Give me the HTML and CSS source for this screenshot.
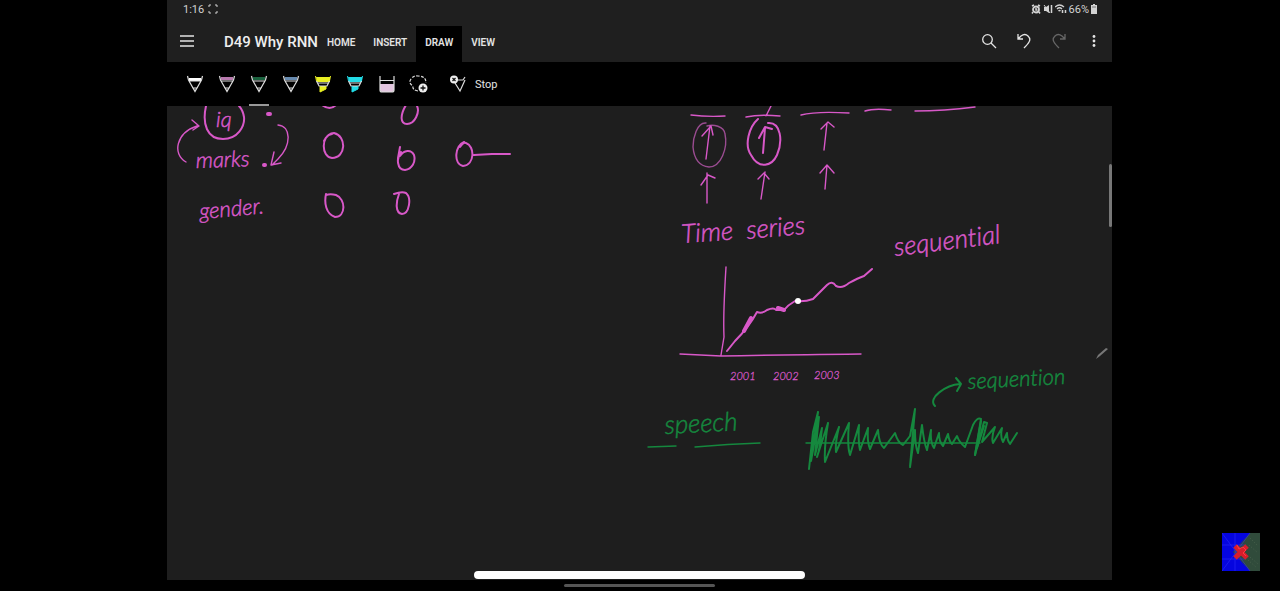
FILE: index.html
```html
<!DOCTYPE html>
<html lang="en">
<head>
<meta charset="utf-8">
<meta name="viewport" content="width=device-width, initial-scale=1">
<title>D49 Why RNN</title>
<link rel="stylesheet" href="styles.css">
</head>
<body>
<div class="app">
  <div class="status">
    <span class="status-side">1:16
      <svg width="10" height="10" viewBox="0 0 10 10" class="line corners"><path d="M1 3V1h2M7 1h2v2M1 7v2h2M7 9h2V7"/></svg>
    </span>
    <span class="status-side status-right">
      <svg width="10" height="10" viewBox="0 0 10 10"><circle cx="5" cy="5.500" r="3" fill="none" stroke="currentColor" stroke-width="1.800"/><path d="M1 2l2-1M9 2L7 1M2 8L1 9.500M8 8l1 1.500M5 4v2h1.500" stroke="currentColor" stroke-width="1.500" fill="none"/></svg>
      <svg width="10" height="10" viewBox="0 0 10 10"><path d="M1 3h2l3-2v8L3 7H1z" fill="currentColor"/><path d="M1 1l6 8" stroke="currentColor"/><path d="M8.500 1v8" stroke="currentColor" stroke-width="1.500"/></svg>
      <svg width="12" height="10" viewBox="0 0 12 10" fill="none" stroke="currentColor"><path d="M0 3q4.500-4 9 0M2 5q2.500-2.500 5 0M3.500 7q1-1 2 0" stroke-width="1.300"/><path d="M7.500 6v3M10.500 6v3" stroke-width="1.500"/></svg>
      <span>66%</span>
      <svg width="6" height="10" viewBox="0 0 6 10"><path d="M2 0h2v1h2v9H0V1h2z" fill="currentColor"/><path d="M1 3h4" stroke="#777"/></svg>
    </span>
  </div>

  <header class="header">
    <button class="icon-button menu" aria-label="Menu"><svg width="16" height="14" viewBox="0 0 16 14" class="line"><path d="M1 2h14M1 7h14M1 12h14"/></svg></button>
    <h1 class="title">D49 Why RNN</h1>
    <nav class="tabs">
      <button class="tab">HOME</button>
      <button class="tab">INSERT</button>
      <button class="tab active">DRAW</button>
      <button class="tab">VIEW</button>
    </nav>
    <div class="actions">
      <button class="icon-button" aria-label="Search"><svg width="16" height="16" viewBox="0 0 16 16" class="line"><circle cx="6.500" cy="6.500" r="4.800"/><path d="M10 10l5 5"/></svg></button>
      <button class="icon-button" aria-label="Undo"><svg width="16" height="16" viewBox="0 0 16 16" class="line"><path d="M2 1v5h5M2 6l3-3q4-3 7 0t1 6q-1 2-5 6"/></svg></button>
      <button class="icon-button faded" aria-label="Redo"><svg width="16" height="16" viewBox="0 0 16 16" class="line"><path d="M14 1v5H9M14 6l-3-3Q7 0 4 3t-1 6q1 2 5 6"/></svg></button>
      <button class="icon-button" aria-label="More"><svg width="16" height="16" viewBox="0 0 16 16" fill="currentColor"><circle cx="8" cy="3.500" r="1.400"/><circle cx="8" cy="8" r="1.400"/><circle cx="8" cy="12.500" r="1.400"/></svg></button>
    </div>
  </header>

  <div class="toolbar" role="toolbar" aria-label="Drawing tools">
    <button class="tool" aria-label="White pen"><svg width="18" height="18" viewBox="0 0 18 18"><path d="M3 3h12v3H3z" fill="#fff"/><path d="M1.500 1l1 4L9 16.500 15.500 5l1-4M3 6h12M7 13h4l-2 3z" class="pen"/></svg></button>
    <button class="tool" aria-label="Pink pen"><svg width="18" height="18" viewBox="0 0 18 18"><path d="M3 2h12v3H3z" fill="#b779ad"/><path d="M1.500 1l1 4L9 16.500 15.500 5l1-4M3 6h12M7 13h4l-2 3z" class="pen"/></svg></button>
    <button class="tool selected" aria-label="Green pen"><svg width="18" height="18" viewBox="0 0 18 18"><path d="M3 2h12v3H3z" fill="#19613d"/><path d="M1.500 1l1 4L9 16.500 15.500 5l1-4M3 6h12M7 13h4l-2 3z" class="pen"/></svg></button>
    <button class="tool" aria-label="Blue pen"><svg width="18" height="18" viewBox="0 0 18 18"><path d="M3 2h12v3H3z" fill="#6689ad"/><path d="M1.500 1l1 4L9 16.500 15.500 5l1-4M3 6h12M7 13h4l-2 3z" class="pen"/></svg></button>
    <button class="tool" aria-label="Yellow highlighter"><svg width="18" height="18" viewBox="0 0 18 18"><path d="M2 2h14v5H3zM6 11h6v3l-6 3z" fill="#e8ef22"/><path d="M2.500 6L5 11h8l2.500-5M4 8h10" class="pen"/><path d="M1.500 1l1 5M16.500 1l-1 5M6 11v6l6-3v-3" fill="none" stroke="#e8ef22"/></svg></button>
    <button class="tool" aria-label="Cyan highlighter"><svg width="18" height="18" viewBox="0 0 18 18"><path d="M2 2h14v5H3zM6 11h6v3l-6 3z" fill="#22dce7"/><path d="M2.500 6L5 11h8l2.500-5M4 8h10" class="pen"/><path d="M1.500 1l1 5M16.500 1l-1 5M6 11v6l6-3v-3" fill="none" stroke="#22dce7"/></svg></button>
    <button class="tool" aria-label="Eraser"><svg width="18" height="18" viewBox="0 0 18 18"><path d="M2 9h14v6q0 2-2 2H4q-2 0-2-2z" fill="#e2c5df"/><path d="M2 1v14q0 2 2 2h10q2 0 2-2V1M2 5.500h14" class="pen"/></svg></button>
    <button class="tool" aria-label="Lasso select"><svg width="20" height="18" viewBox="0 0 20 18"><path d="M9 16Q3 15 4 11-1 8 2 4t7-3q8 0 8 7" class="pen" stroke-dasharray="3 1.500"/><circle cx="14" cy="13" r="4.500" fill="#eee"/><path d="M11.500 13h5M14 10.500v5" stroke="#111" stroke-width="1.300"/></svg></button>
    <button class="stop"><svg width="18" height="18" viewBox="0 0 18 18"><path d="M8 5h6l2-3M6 8l5 8 5-11" class="pen"/><circle cx="5" cy="4.500" r="4" fill="#eee"/><path d="M3.500 3l3 3M6.500 3l-3 3" stroke="#111" stroke-width="1.200"/></svg>Stop</button>
  </div>

  <main class="page">
    <svg class="ink" viewBox="167 106 945 474" preserveAspectRatio="xMinYMin meet">
      <g class="pink">
        <path d="M206 106c-4 18 1 33 17 33 15 0 22-13 21-22-1-6-3-9-5-11M322 105q8 6 14 0"/>
        <path class="thick" d="M268 114h2M264 165h1"/>
        <path class="fine" d="M186 162c-14-8-10-29 11-36M192 120l7 6-6 4M278 125c13 1 14 20 0 34l-6 6M274 152l-3 13 10-2"/>
        <path d="M332 134c-11 1-11 23 0 24 14 0 15-22 2-25-5 0-8 4-10 8M326 194c-2 9 0 20 9 23 11 0 11-18 1-22-4-1-7-1-10 0M406 105c-6 10-6 19 1 19 8 0 13-12 10-18M400 147l-2 11M401 152c-5 6-4 18 4 18 7-1 11-8 9-15-3-6-10-5-14 1M394 194q8-3 12-1c6 5 3 21-4 21-7-1-6-12-3-20M464 142c-9 3-11 22-1 24 12-1 12-20 3-23-2-1-4 1-6 4M474 155l18-1h18"/>
        <path class="fine" d="M691 115q16 2 34 1M746 117q14-3 34-1M801 115q15-4 48-2M865 111q9-3 26-1M915 111q29 0 60-4M771 106l-5 10"/>
        <path class="faint" d="M706 123c-9-1-13 15-13 24 1 11 6 19 16 20 12 0 19-19 16-33-1-8-12-10-18-8"/>
        <path class="fine" d="M706 159l4-33M702 136l9-10 2 9"/>
        <path d="M758 119c-9 8-14 26-7 36 8 15 21 11 26 0 6-14 4-33-9-32M763 153l2-25M759 138l6-11 7 2"/>
        <path class="fine" d="M824 150l3-27M821 129l7-7 6 5M825 189l2-24M820 173l7-8 7 8M707 203v-30M701 185l7-10 7 3M761 199l4-27M758 179l6-6 5 6"/>
        <path class="fine" d="M726 267q-3 48-2 70l-3 18M680 354q20 1 41 2 46-1 140-2"/>
        <path class="trend" d="M727 351l8-10q14-14 22-29 5 2 10-2 7-3 9 0 6 0 8 0 4-5 11-9 10 1 18-2l14-14q5-5 9 1 6 3 13-3 9-5 15-7l8-7"/>
        <path class="thick" d="M744 331l7-13M778 308l6 2"/>
      </g>
      <circle cx="798" cy="301" r="3" fill="#fff"/>
      <g class="green">
        <path class="fine" d="M648 447l28-1M695 447q33-3 65-4M806 443h174"/>
        <path d="M935 406c-8-8 11-21 25-22M956 378l5 6-4 7"/>
        <path d="M809 469L813 432 818 412 811 461 819 417 815 455 822 428Q820 449 817 457L828 423Q824 447 825 462L839 427Q835 443 836 452L849 423Q847 446 850 455L859 425Q858 441 860 450L868 428Q867 442 870 449L878 430Q879 444 884 448L895 433Q898 443 903 445L910 436 915 409 910 467 915 430Q915 446 918 453L922 425Q924 443 927 450L931 430Q930 442 934 448L939 433Q939 442 943 446L948 434Q949 441 952 444L957 436Q959 442 965 447L973 425Q977 417 981 419L975 455 984 422 987 423 982 442 995 427Q991 437 993 443L1002 428Q1000 437 1003 442L1007 433Q1007 440 1010 444L1017 433"/>
        <path d="M975 455l6-34-4 27 7-22"/>
      </g>
      <g class="handwriting pink-text">
        <text x="216" y="127">iq</text>
        <text x="196" y="168" transform="rotate(-2 196 168)">marks</text>
        <text x="200" y="219" transform="rotate(-5 200 219)">gender.</text>
        <text class="hand-large" x="682" y="243" transform="rotate(-4 682 243)">Time</text>
        <text class="hand-large" x="747" y="239" transform="rotate(-5 747 239)">series</text>
        <text class="hand-large" x="895" y="256" transform="rotate(-7 895 256)">sequential</text>
        <text class="hand-small" x="730" y="380">2001</text>
        <text class="hand-small" x="773" y="380">2002</text>
        <text class="hand-small" x="814" y="379">2003</text>
      </g>
      <g class="handwriting green-text">
        <text class="hand-large" x="665" y="434" transform="rotate(-3 665 434)">speech</text>
        <text x="968" y="389" transform="rotate(-3 968 389)">sequention</text>
      </g>
      <path d="M1096 359l2-4 8-7 2 1-8 7z" fill="#777"/>
    </svg>
    <div class="scroll-thumb"></div>
    <div class="pill"></div>
  </main>
  <div class="home-area"><div class="home-line"></div></div>
</div>
<svg class="badge" viewBox="0 0 38 38" aria-hidden="true">
  <path d="M0 0h38v38H0z" fill="#304b3b"/><path d="M0 0h28L11 19l17 19H0z" fill="#0505df"/>
  <path d="M0 12h24M0 26h24M13 0v38M0 38L28 0M0 0l28 38" stroke="#3435ff" stroke-width=".7" opacity=".7"/>
  <path d="M28 5l8 8M27 12l9 8M26 27l9 8M28 24l8 7" stroke="#48614c" stroke-dasharray="1 2"/>
  <path d="M13 13l12 12M25 13L13 25" stroke="#d91d2b" stroke-width="5"/><path d="M15 12l2 4 4-2 3 3-3 3 3 3" fill="none" stroke="#ff3b42"/>
</svg>
</body>
</html>
```
FILE: styles.css
```css
* { box-sizing: border-box; }
body {
  margin: 0;
  min-height: 100vh;
  display: flex;
  padding: 0 168px 0 167px;
  background: #000;
  color: #e4e4e4;
  font-family: Roboto, "Liberation Sans", sans-serif;
}
button {
  border: 0;
  padding: 0;
  background: transparent;
  color: inherit;
  font: inherit;
}
svg { display: block; }
.line { fill: none; stroke: currentColor; stroke-width: 1.3; }
.corners { stroke-width: 1; }
.app { flex: 1; min-width: 0; display: flex; flex-direction: column; background: #1f1f1f; }
.status {
  height: 26px;
  padding: 0 15px 8px 16px;
  display: flex;
  align-items: center;
  justify-content: space-between;
  font-size: 11px;
  color: #d2d2d2;
}
.status-side { display: flex; align-items: center; gap: 4px; }
.status-right { gap: 2px; }
.header { height: 36px; display: flex; align-items: center; padding: 0 6px 0 8px; }
.icon-button { width: 24px; height: 32px; display: flex; align-items: center; justify-content: center; }
.menu { margin-bottom: 6px; }
.title { margin: 0 0 4px 25px; font-size: 15px; line-height: 20px; font-weight: 500; white-space: nowrap; color: #eee; }
.tabs { align-self: stretch; display: flex; }
.tab { padding: 0 9px 4px; font-size: 10px; font-weight: 600; }
.active { background: #000; }
.actions { margin: 0 0 6px auto; display: flex; gap: 11px; }
.faded { color: #666; }
.toolbar { height: 44px; padding-left: 12px; background: #000; display: flex; }
.tool { width: 32px; display: flex; align-items: center; justify-content: center; }
.selected { position: relative; }
.selected::after { content: ""; position: absolute; right: 6px; bottom: 0; left: 6px; height: 2px; background: #999; }
.pen { fill: none; stroke: #ddd; stroke-width: 1.2; }
.stop { margin-left: 14px; display: flex; align-items: center; gap: 8px; font-size: 11px; }
.page { position: relative; flex: 1; overflow: hidden; background: #1e1e1e; }
.ink { width: 100%; height: auto; }
.pink, .green { fill: none; stroke-linecap: round; stroke-linejoin: round; stroke-width: 2; }
.pink { stroke: #d858c8; }
.green { stroke: #15883e; }
.pink .fine, .green .fine { stroke-width: 1.4; }
.pink .faint { stroke: #9a4c91; stroke-width: 1.4; }
.pink .thick { stroke-width: 4; }
.handwriting { font-family: Lato, "Open Sans", sans-serif; font-style: italic; font-size: 22px; font-weight: 300; font-variant-ligatures: none; stroke-width: 0.5; }
.pink-text { fill: #d858c8; stroke: #d858c8; }
.green-text { fill: #15883e; stroke: #15883e; }
.hand-large { font-size: 26px; }
.hand-small { font-size: 11px; stroke-width: 0.3; }
.scroll-thumb { position: absolute; top: 58px; right: 0; width: 3px; height: 63px; border-radius: 2px; background: #777; }
.pill { position: absolute; right: 0; bottom: 1px; left: 0; width: 35%; height: 8px; margin: auto; border-radius: 4px; background: #fff; }
.home-area { height: 11px; padding-top: 4px; background: #000; }
.home-line { width: 16%; height: 3px; margin: auto; border-radius: 2px; background: #555; }
.badge { position: absolute; right: 20px; bottom: 20px; width: 38px; height: 38px; }
```
